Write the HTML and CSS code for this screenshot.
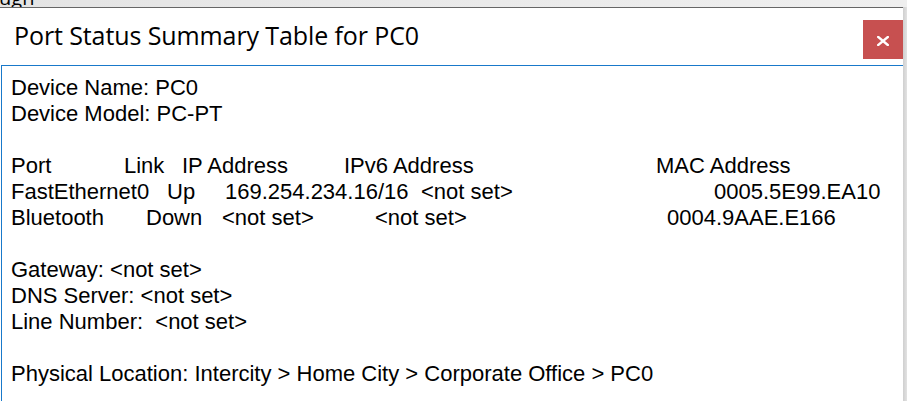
FILE: index.html
```html
<!DOCTYPE html>
<html>
<head>
<meta charset="utf-8">
<title>Port Status Summary Table for PC0</title>
<link rel="stylesheet" href="styles.css">
</head>
<body>
<div class="behind"><span class="behind-text">ugh</span></div>
<div class="window">
  <div class="titlebar">
    <div class="title">Port Status Summary Table for PC0</div>
    <button class="close" aria-label="Close">
      <svg width="12" height="10" viewBox="0 0 12 10"><path d="M1.2 1 L10.8 9 M10.8 1 L1.2 9" stroke="#fff" stroke-width="2.4" stroke-linecap="square"/></svg>
    </button>
  </div>
  <div class="panel">
    <div class="line">Device Name: PC0</div>
    <div class="line">Device Model: PC-PT</div>
    <div class="line"></div>
    <div class="line row row-head"><span>Port</span><span>Link</span><span>IP Address</span><span>IPv6 Address</span><span>MAC Address</span></div>
    <div class="line row row-fe"><span>FastEthernet0</span><span>Up</span><span>169.254.234.16/16</span><span>&lt;not set&gt;</span><span>0005.5E99.EA10</span></div>
    <div class="line row row-bt"><span>Bluetooth</span><span>Down</span><span>&lt;not set&gt;</span><span>&lt;not set&gt;</span><span>0004.9AAE.E166</span></div>
    <div class="line"></div>
    <div class="line">Gateway: &lt;not set&gt;</div>
    <div class="line">DNS Server: &lt;not set&gt;</div>
    <div class="line">Line Number:  &lt;not set&gt;</div>
    <div class="line"></div>
    <div class="line">Physical Location: Intercity &gt; Home City &gt; Corporate Office &gt; PC0</div>
  </div>
</div>
</body>
</html>
```

FILE: styles.css
```css
html, body {
  margin: 0;
  padding: 0;
}
body {
  width: 907px;
  height: 401px;
  overflow: hidden;
  background: linear-gradient(to right, #e6e6e6 0, #e6e6e6 903px, #cfcfcf 903px, #e2e2e2 907px);
}
.behind {
  height: 7px;
  overflow: hidden;
  background: linear-gradient(to right, #e4e4e4, #efefef);
  font-family: "Open Sans", "Noto Sans", sans-serif;
  font-size: 20px;
  line-height: 20px;
  color: #000;
}
.behind-text {
  display: block;
  margin-top: -12px;
  margin-left: -1px;
}
.window {
  width: 903px;
  height: 394px;
  background: #fff;
  border-top: 1px solid #666;
  box-sizing: border-box;
}
.titlebar {
  height: 57px;
  display: flex;
  align-items: flex-start;
  justify-content: space-between;
}
.title {
  font-family: "Open Sans", "Noto Sans", sans-serif;
  font-size: 25px;
  color: #000;
  padding-left: 14px;
  padding-top: 12px;
  line-height: 30px;
  letter-spacing: -0.1px;
}
.close {
  margin-top: 12px;
  width: 40px;
  height: 39px;
  border: 0;
  padding: 0;
  background: #c75050;
  display: flex;
  align-items: center;
  justify-content: center;
}
.close svg {
  display: block;
  margin-top: 2px;
}
.panel {
  margin-left: 1px;
  border-top: 1px solid #1979ca;
  border-left: 1px solid #1979ca;
  padding: 9px 0 0 9px;
  font-family: "Liberation Sans", Arial, sans-serif;
  font-size: 22px;
  color: #000;
  height: 340px;
}
.line {
  height: 26px;
  line-height: 26px;
  white-space: pre;
}
.row {
  display: grid;
}
.row-head {
  grid-template-columns: 113px 58px 162px 312px auto;
}
.row-fe {
  grid-template-columns: 156px 58px 196px 293px auto;
}
.row-bt {
  grid-template-columns: 135px 76px 153px 292px auto;
}
```
